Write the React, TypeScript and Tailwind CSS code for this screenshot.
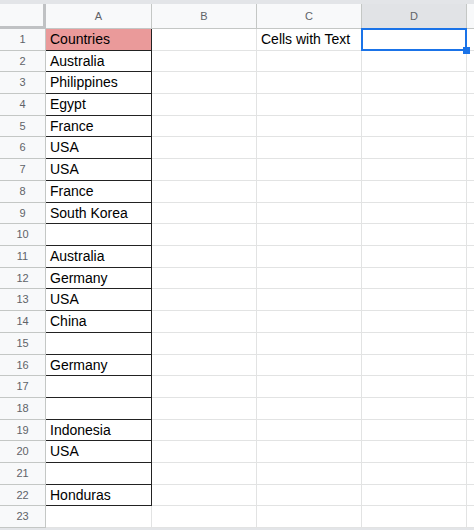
import React from "react";

const countries = [
  "Countries",
  "Australia",
  "Philippines",
  "Egypt",
  "France",
  "USA",
  "USA",
  "France",
  "South Korea",
  "",
  "Australia",
  "Germany",
  "USA",
  "China",
  "",
  "Germany",
  "",
  "",
  "Indonesia",
  "USA",
  "",
  "Honduras",
  "",
];

const rowHeights = [
  "h-[22px]", "h-[21px]", "h-[22px]", "h-[22px]", "h-[21px]", "h-[22px]",
  "h-[22px]", "h-[22px]", "h-[21px]", "h-[22px]", "h-[22px]", "h-[21px]",
  "h-[22px]", "h-[22px]", "h-[22px]", "h-[21px]", "h-[22px]", "h-[22px]",
  "h-[21px]", "h-[22px]", "h-[22px]", "h-[21px]", "h-[22px]",
];

const ColumnHeader = ({
  label,
  width,
  active,
}: {
  label: string;
  width: string;
  active?: boolean;
}) => (
  <div
    className={`${width} shrink-0 h-full flex items-center justify-center border-r border-b border-[#c4c7c5] text-[11px] text-[#5f6368] ${
      active ? "bg-[#e1e3e6]" : "bg-[#f8f9fa]"
    }`}
  >
    {label}
  </div>
);

const Row = ({ index }: { index: number }) => {
  const value = countries[index];
  const bordered = index < 22;
  const header = index === 0;
  return (
    <div className={`relative flex ${rowHeights[index]} ${header ? "z-10" : ""}`}>
      <div className="w-[46px] shrink-0 flex items-center justify-center border-r border-b border-[#c4c7c5] bg-[#f8f9fa] text-[11px] text-[#5f6368]">
        {index + 1}
      </div>
      <div
        className={`w-[106px] shrink-0 flex items-center pl-[4px] text-[14px] text-black border-b border-r ${
          bordered ? "border-[#222]" : "border-[#e2e3e3]"
        } ${header ? "bg-[#ea9a9a]" : "bg-white"}`}
      >
        {value}
      </div>
      <div className="w-[105px] shrink-0 border-r border-b border-[#e2e3e3]" />
      <div className="w-[105px] shrink-0 flex items-center pl-[4px] text-[14px] text-black whitespace-nowrap border-r border-b border-[#e2e3e3]">
        {header ? "Cells with Text" : ""}
      </div>
      <div className="relative w-[105px] shrink-0 border-r border-b border-[#e2e3e3]">
        {header && (
          <>
            {/* active cell outline + fill handle */}
            <div className="absolute -left-px -top-px -right-px -bottom-px border-2 border-[#1a73e8]" />
            <div className="absolute -right-[4px] -bottom-[4px] w-[7px] h-[7px] bg-[#1a73e8]" />
          </>
        )}
      </div>
      <div className="flex-1 border-b border-[#e2e3e3]" />
    </div>
  );
};

export default function App() {
  return (
    <div className="w-[474px] h-[530px] overflow-hidden bg-white font-['Liberation_Sans',Arial,sans-serif]">
      <div className="h-[4px] bg-[#e3e5e8]" />
      <div className="flex h-[25px]">
        <div className="w-[46px] shrink-0 h-full bg-[#f8f9fa] border-r-[3px] border-b-[3px] border-[#c0c2c4]" />
        <ColumnHeader label="A" width="w-[106px]" />
        <ColumnHeader label="B" width="w-[105px]" />
        <ColumnHeader label="C" width="w-[105px]" />
        <ColumnHeader label="D" width="w-[105px]" active />
        <div className="flex-1 h-full bg-[#f8f9fa] border-b border-[#c4c7c5]" />
      </div>
      {countries.map((_, i) => (
        <Row key={i} index={i} />
      ))}
      <div className="h-[2px] bg-[#e3e5e8]" />
    </div>
  );
}
